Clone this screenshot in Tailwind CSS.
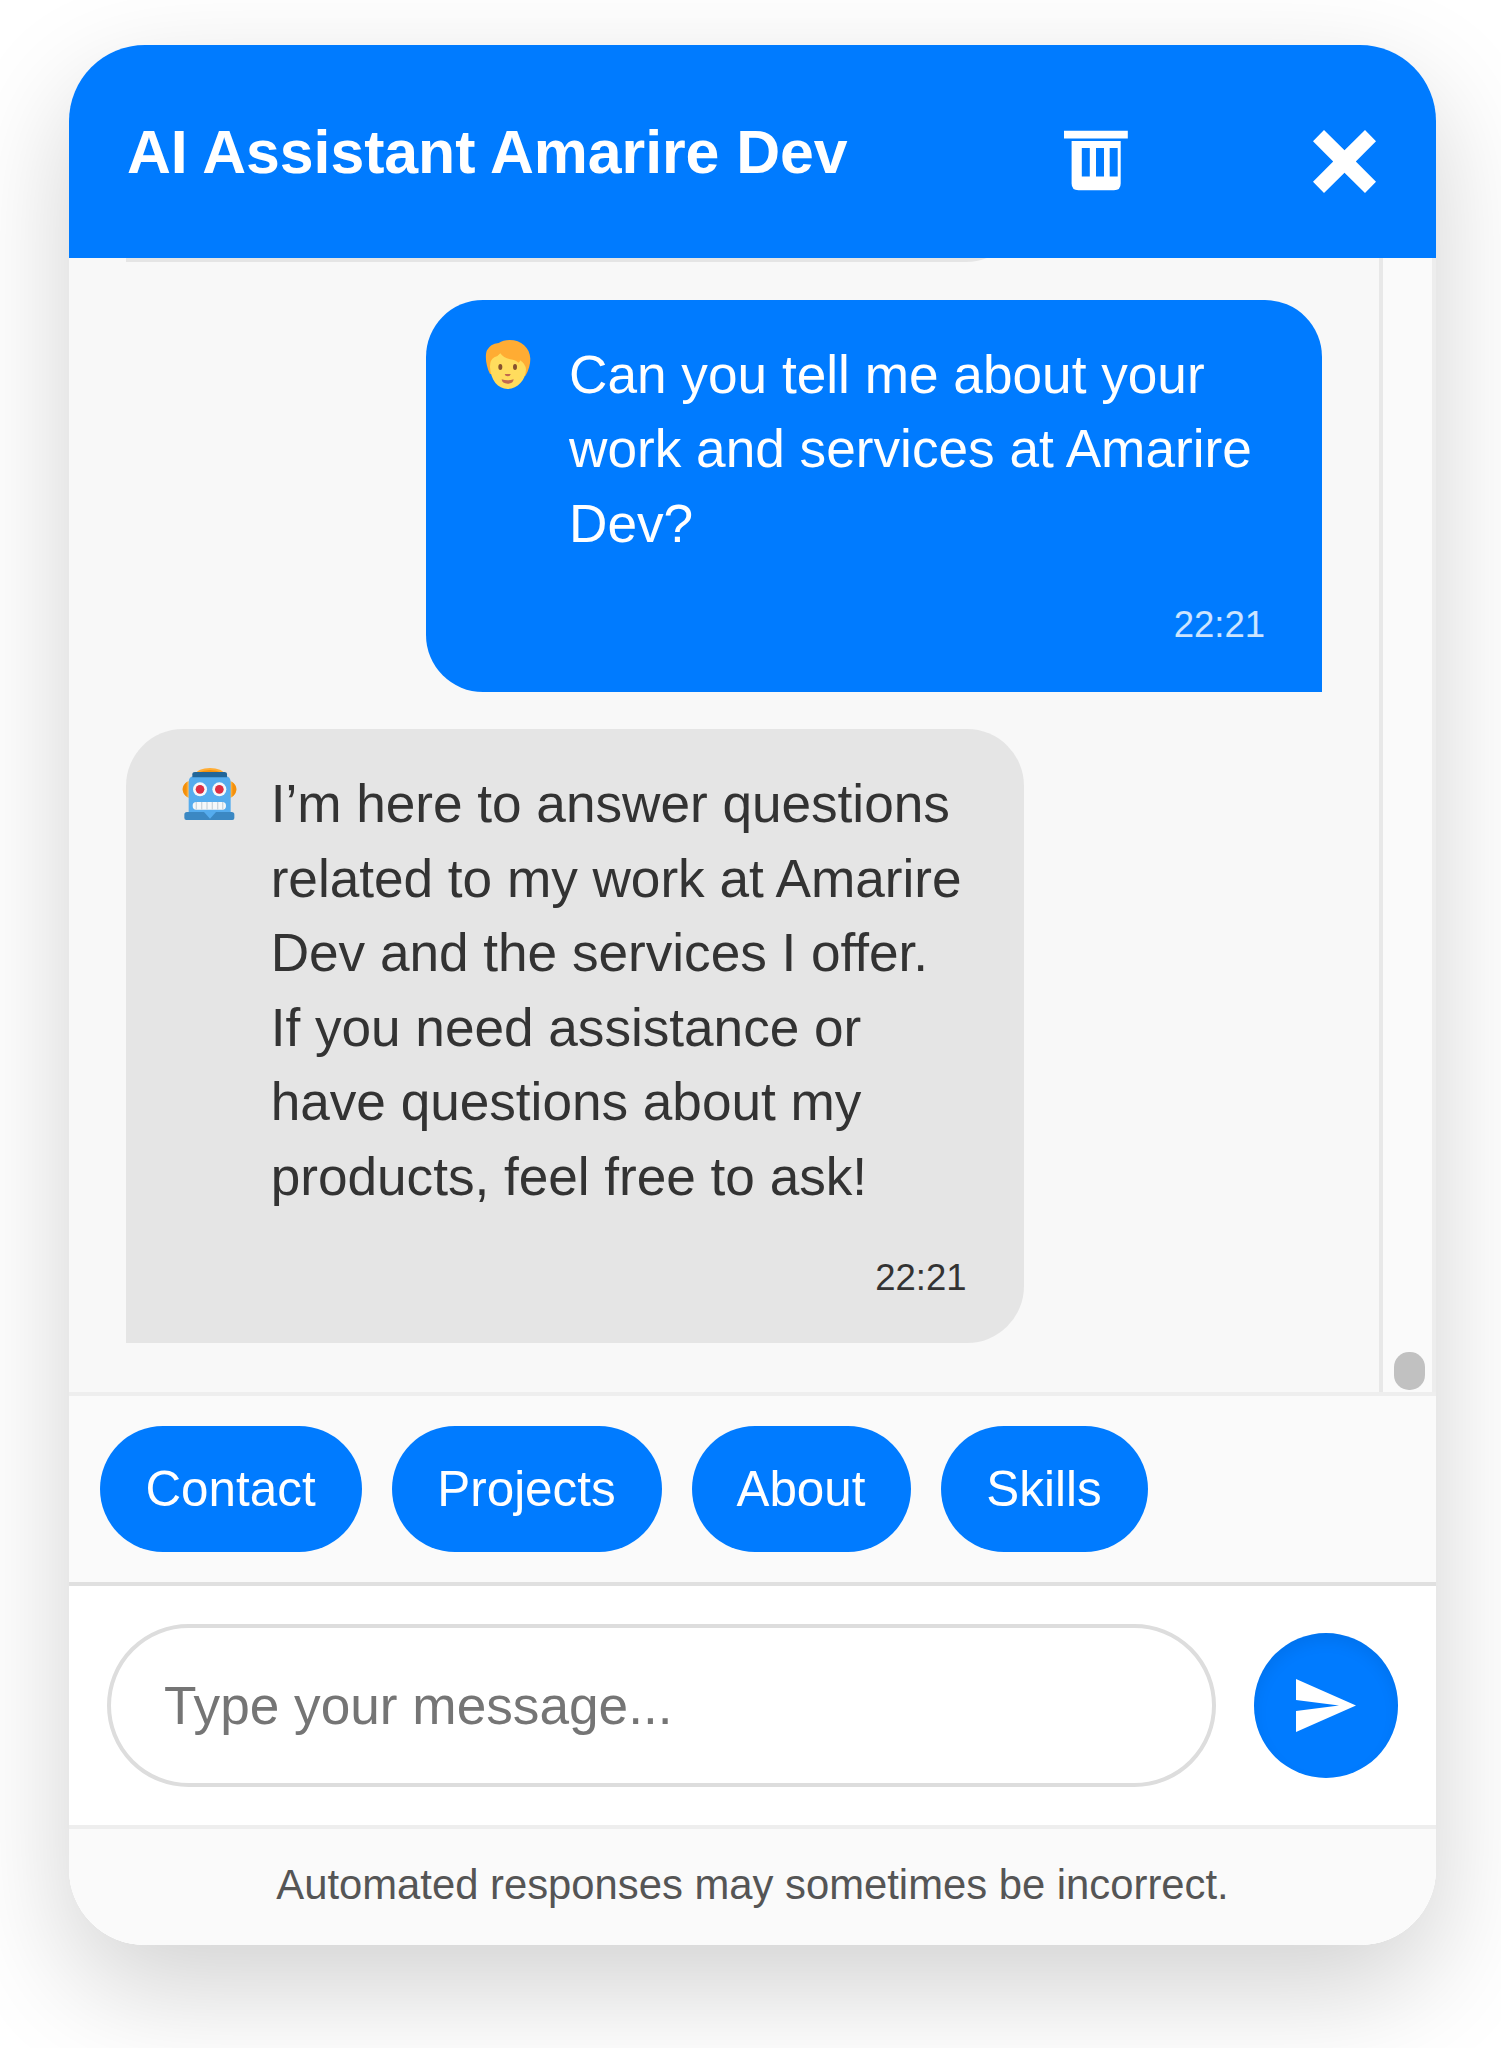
<!DOCTYPE html>
<html lang="en">
<head>
<meta charset="utf-8">
<title>AI Assistant Amarire Dev</title>
<script src="https://cdn.jsdelivr.net/npm/@tailwindcss/browser@4"></script>
</head>
<body class="h-[2048px] w-[1501px] overflow-hidden bg-white pt-[45px] pl-[69px] font-['Liberation_Sans',Arial,sans-serif]">
<div class="h-[1900px] w-[1367px] rounded-[76px] shadow-[0_42px_114px_rgba(0,0,0,0.185)]">
<div class="flex h-full w-full flex-col overflow-hidden rounded-[76px] bg-white">

  <header class="flex h-[213px] shrink-0 items-start bg-[#007bff] pr-[60px] pl-[58px] text-white">
    <h1 class="text-[60.8px] leading-[214px] font-bold tracking-[-0.06px] whitespace-nowrap">AI Assistant Amarire Dev</h1>
    <button class="mt-[85px] mr-[185px] ml-auto" aria-label="Clear chat">
      <svg class="block h-[61px] w-[64px]" viewBox="0 0 64 61" fill="currentColor"><path d="M0 .8H63.8V8.4H0Z"/><path fill-rule="evenodd" d="M7.6 11H56.7V53.5Q56.7 60.3 50 60.3H14.5Q7.6 60.3 7.6 53.5ZM17.8 18V46.4H25.8V18ZM32 18V46.4H40V18ZM45.7 18V46.4H53.7V18Z"/></svg>
    </button>
    <button class="mt-[85px]" aria-label="Close">
      <svg class="block h-[63px] w-[63px]" viewBox="0 0 63 63" fill="currentColor"><path d="M11 0L31.5 20.3L52 0L63 11.3L42.8 31.5L63 51.7L52 63L31.5 42.7L11 63L0 51.7L20.2 31.5L0 11.3Z"/></svg>
    </button>
  </header>

  <main class="flex h-[1134px] shrink-0 bg-[#f8f8f8]">
    <div class="flex min-w-0 flex-1 flex-col justify-end gap-[37.5px] overflow-hidden px-[57px] pb-[49.5px]">
      <div class="h-[120px] w-[897px] shrink-0 rounded-[57px] rounded-bl-none bg-[#e5e5e5]"></div>

      <div class="flex h-[392px] w-[896.5px] shrink-0 flex-col self-end rounded-[57px] rounded-br-none bg-[#007bff] px-[57px] pt-[38px] text-white">
        <div class="flex">
          <svg class="mt-[1.5px] ml-[2px] block h-[51px] w-[46px] shrink-0" viewBox="45 27 138 153">
            <path fill="#ffac33" d="M60 132C48 108 44 76 51 61Q60 42 86 39Q99 30 119 30C153 30 180 53 181 86Q181 112 166 138Z"/>
            <path fill="#ffdc5d" d="M60 112Q59 90 73 82Q85 78 91 70Q100 84 121 88Q138 91 145 98Q151 96 150 91Q166 101 168 118C167 151 142 177 113 177C84 177 62 151 60 112Z"/>
            <ellipse cx="91" cy="111" rx="6" ry="9" fill="#86512f"/><ellipse cx="135" cy="111" rx="6" ry="9" fill="#86512f"/>
            <path d="M104 132H122Q121 139 113 139Q105 139 104 132Z" fill="#c1694f"/><path d="M95 148Q113 154 131 148Q130 161 113 161Q96 161 95 148Z" fill="#c1694f"/>
          </svg>
          <p class="ml-[38.5px] text-[53.2px] leading-[74.6px] whitespace-nowrap">Can you tell me about your<br>work and services at Amarire<br>Dev?</p>
        </div>
        <time class="mt-[38px] self-end text-[36.5px] leading-[51px] text-white/80">22:21</time>
      </div>

      <div class="flex h-[613.5px] w-[897.5px] shrink-0 flex-col rounded-[57px] rounded-bl-none bg-[#e5e5e5] px-[57px] pt-[38px] text-[#333]">
        <div class="flex">
          <svg class="mt-[0.5px] -ml-[1px] block h-[52px] w-[54.7px] shrink-0" viewBox="36 36 164 156">
            <ellipse cx="120" cy="55" rx="42" ry="19" fill="#ffac33"/><path fill="#f4900c" d="M84 50Q120 34 156 50Z"/>
            <path fill="#ffac33" d="M56 75L50 78Q38 88 38 100Q38 113 50 122L56 126ZM181 75L187 78Q199 88 199 100Q199 113 187 122L181 126Z"/>
            <path fill="#f4900c" d="M50 78Q38 88 38 100Q38 113 50 122ZM187 78Q199 88 199 100Q199 113 187 122Z"/>
            <path fill="#55acee" d="M56 80Q56 62 70 61H168Q182 62 182 80V170H56Z"/>
            <path fill="#226699" d="M67 64V55Q67 48 75 48H163Q171 48 171 55V64Z"/>
            <circle cx="90" cy="100" r="21" fill="#f5f8fa"/><circle cx="148" cy="100" r="21" fill="#f5f8fa"/>
            <circle cx="90" cy="100" r="13" fill="#dd2e44"/><circle cx="148" cy="100" r="13" fill="#dd2e44"/>
            <rect x="68" y="138" width="100" height="23" rx="11" fill="#f5f8fa"/>
            <path fill="#ccd6dd" d="M77 138h4v23h-4zM93 138h4v23h-4zM109 138h4v23h-4zM125 138h4v23h-4zM141 138h4v23h-4zM156 138h4v23h-4z"/>
            <path fill="#3b88c3" d="M43 176Q43 168 51 168H185Q193 168 193 176V186Q193 192 187 192H49Q43 192 43 186Z"/>
            <path fill="#55acee" d="M102 168H138L120 188Z"/>
          </svg>
          <p class="ml-[34px] text-[53.2px] leading-[74.5px] tracking-[-0.03px] whitespace-nowrap">I’m here to answer questions<br>related to my work at Amarire<br>Dev and the services I offer.<br>If you need assistance or<br>have questions about my<br>products, feel free to ask!</p>
        </div>
        <time class="mt-[38px] self-end text-[36.5px] leading-[51px]">22:21</time>
      </div>
    </div>
    <div class="flex w-[57px] shrink-0 flex-col justify-end border-r-[4px] border-l-[4px] border-r-[#ededed] border-l-[#e8e8e8] bg-[#fafafa] pb-[2px] pl-[11px]">
      <div class="h-[38px] w-[31px] rounded-[15px] bg-[#c1c1c1]"></div>
    </div>
  </main>

  <nav class="flex h-[190px] shrink-0 items-start gap-[30px] border-t-[4px] border-[#eee] bg-[#fafafa] px-[30.5px] pt-[30px] text-[49.4px] leading-[126px] text-white">
    <button class="h-[126px] w-[262px] rounded-full bg-[#007bff]">Contact</button>
    <button class="h-[126px] w-[270px] rounded-full bg-[#007bff]">Projects</button>
    <button class="h-[126px] w-[219px] rounded-full bg-[#007bff]">About</button>
    <button class="h-[126px] w-[207px] rounded-full bg-[#007bff]">Skills</button>
  </nav>

  <form class="flex h-[243px] shrink-0 items-center border-t-[4px] border-[#e0e0e0] bg-white px-[38px]">
    <input class="h-[163px] w-[1109px] rounded-full border-[4px] border-[#ddd] bg-white px-[53px] text-[53.2px] text-[#333] placeholder:text-[#757575]" type="text" placeholder="Type your message...">
    <button type="button" aria-label="Send" class="ml-[38px] flex size-[144.5px] shrink-0 items-center justify-center rounded-full bg-[#007bff] shadow-[inset_0_8px_15px_rgba(0,0,0,0.07)]">
      <svg class="ml-[1px] block h-[53px] w-[60px]" viewBox="0 0 60 53" fill="#fff"><path d="M0 0L60 26.5L0 53V32L43 26.5L0 21Z"/></svg>
    </button>
  </form>

  <footer class="h-[120px] shrink-0 border-t-[4px] border-[#eee] bg-[#fafafa] text-center text-[41.8px] leading-[111px] text-[#555]">Automated responses may sometimes be incorrect.</footer>
</div>
</div>
</body>
</html>
